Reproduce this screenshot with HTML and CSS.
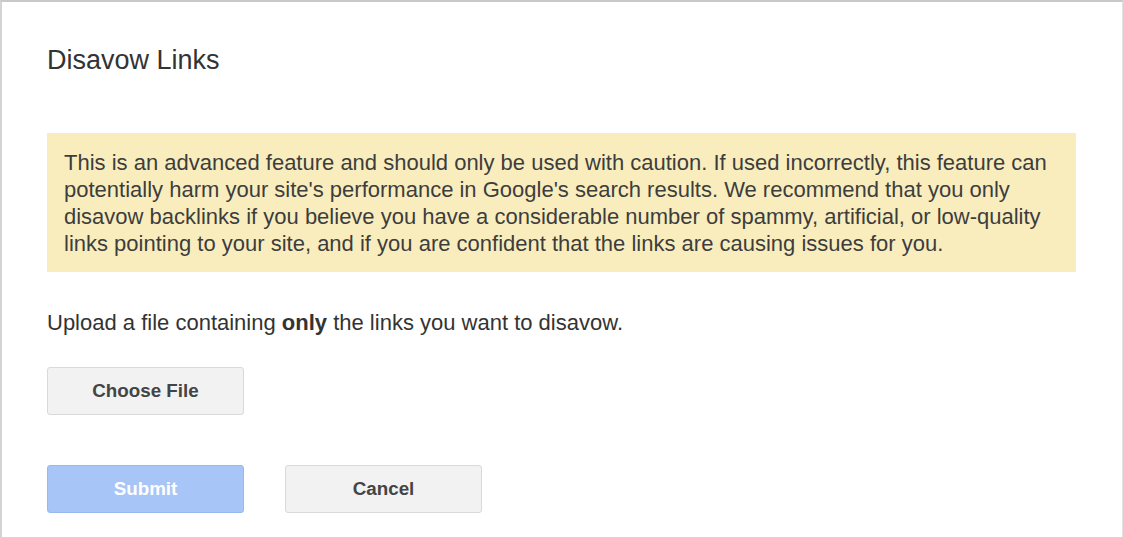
FILE: index.html
```html
<!DOCTYPE html>
<html lang="en">
<head>
  <meta charset="UTF-8" />
  <title>Disavow Links</title>
  <link rel="stylesheet" href="styles.css">
</head>
<body>
  <div class="dialog">
    <h1>Disavow Links</h1>
    <div class="warning">
      This is an advanced feature and should only be used with caution. If used incorrectly, this feature can<br>
      potentially harm your site's performance in Google's search results. We recommend that you only<br>
      disavow backlinks if you believe you have a considerable number of spammy, artificial, or low-quality<br>
      links pointing to your site, and if you are confident that the links are causing issues for you.
    </div>
    <p class="upload">Upload a file containing <b>only</b> the links you want to disavow.</p>
    <button class="btn">Choose File</button>
    <div class="actions">
      <button class="btn btn-blue" disabled>Submit</button>
      <button class="btn">Cancel</button>
    </div>
  </div>
</body>
</html>
```

FILE: styles.css
```css
html, body { margin:0; padding:0; background:#fff;}
body { font-family: Arial, "Liberation Sans", sans-serif; color:#444; width:1123px; height:537px; overflow:hidden;}
.dialog { box-sizing:border-box; height:537px; border-top:2px solid #c8c8c8; border-left:2px solid #d4d4d4; border-right:1px solid #e0e0e0; padding:0 46px 0 45px;}
h1 { font-size:27px; font-weight:normal; color:#333; margin:43px 0 0; line-height:30px;}
.warning { background:#f9edbe; margin-top:58px; padding:16px 17px 15px; font-size:22px; line-height:27px; color:#3d3d3d; white-space:nowrap;}
.upload { font-size:22px; margin:39px 0 0; line-height:24px; color:#333;}
.btn { width:197px; height:48px; font-family:inherit; font-size:18.8px; font-weight:bold; color:#444; background:#f2f2f2; border:1px solid #d9d9d9; border-radius:3px; padding:0;}
.upload + .btn { margin-top:32px;}
.actions { display:flex; gap:41px; margin-top:50px;}
.btn-blue { background:#a7c5f6; border-color:#98b9f0; color:#fff;}
```
